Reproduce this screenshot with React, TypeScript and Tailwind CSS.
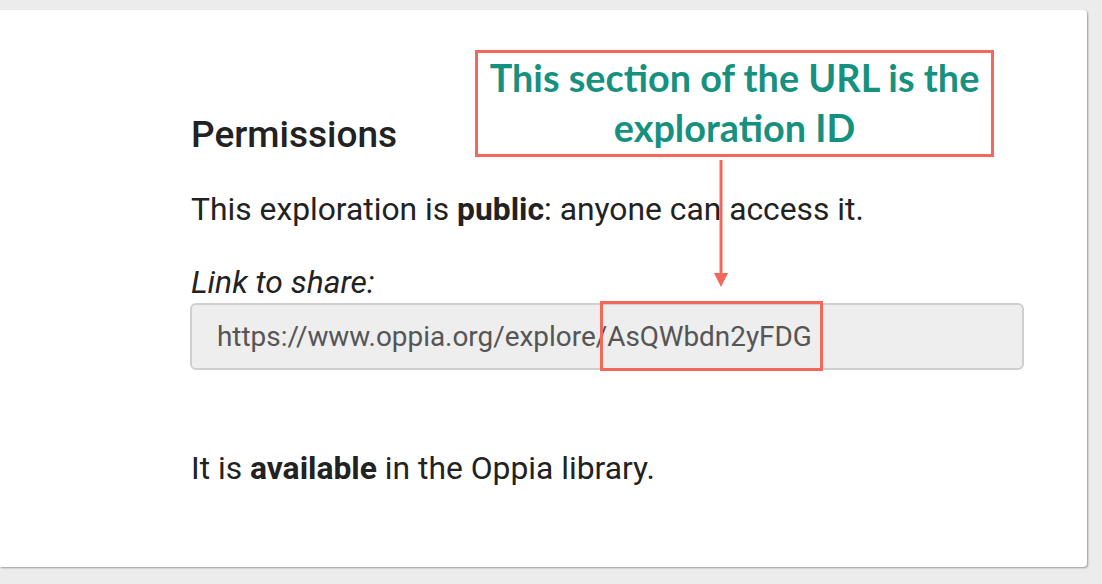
import React from "react";

export default function App() {
  return (
    <div className="w-[1102px] h-[584px] bg-[#ececec] pt-[10px] overflow-hidden" style={{ fontFamily: "Roboto, sans-serif" }}>
      <div className="relative w-[1087px] h-[557px] bg-white rounded-r-[4px] shadow-[1px_1px_2px_rgba(0,0,0,0.35)]">
        <div className="pl-[191px] pt-[103px] pr-[40px] text-[#222]">
          <h2 className="text-[37px] leading-[44px] font-medium text-[#222]">Permissions</h2>
          <p className="mt-[32px] text-[31.8px] leading-[40px]">
            This exploration is <strong className="font-bold">public</strong>: anyone can access it.
          </p>
          <p className="mt-[33px] text-[31.8px] leading-[40px] italic">Link to share:</p>
          <div className="mt-[1px] ml-[-1px] h-[67px] w-[834px] rounded-[6px] border-2 border-[#cfcfcf] bg-[#eeeeee] flex items-center pl-[25px] text-[27.9px] text-[#555]">
            https://www.oppia.org/explore/AsQWbdn2yFDG
          </div>
          <p className="mt-[78px] text-[31.8px] leading-[40px]">
            It is <strong className="font-bold">available</strong> in the Oppia library.
          </p>
        </div>

        {/* ID highlight box */}
        <div className="absolute left-[600px] top-[291px] w-[223px] h-[70px] border-[3px] border-[#f4685b]" />

        {/* Annotation */}
        <div
          className="absolute left-[475px] top-[40px] w-[519px] h-[107px] border-[3px] border-[#f4685b] bg-white flex flex-col items-center justify-start text-[#17917f] font-bold text-[37.8px] leading-[50px]"
          style={{ fontFamily: "Lato, sans-serif" }}
        >
          <span>This section of the URL is the</span>
          <span>exploration ID</span>
        </div>

        {/* Arrow */}
        <svg className="absolute left-[712px] top-[148px]" width="18" height="130" viewBox="0 0 18 130">
          <line x1="9" y1="2" x2="9" y2="116" stroke="#f4685b" strokeWidth="3" />
          <polygon points="2,115 16,115 9,129" fill="#f4685b" />
        </svg>
      </div>
    </div>
  );
}
